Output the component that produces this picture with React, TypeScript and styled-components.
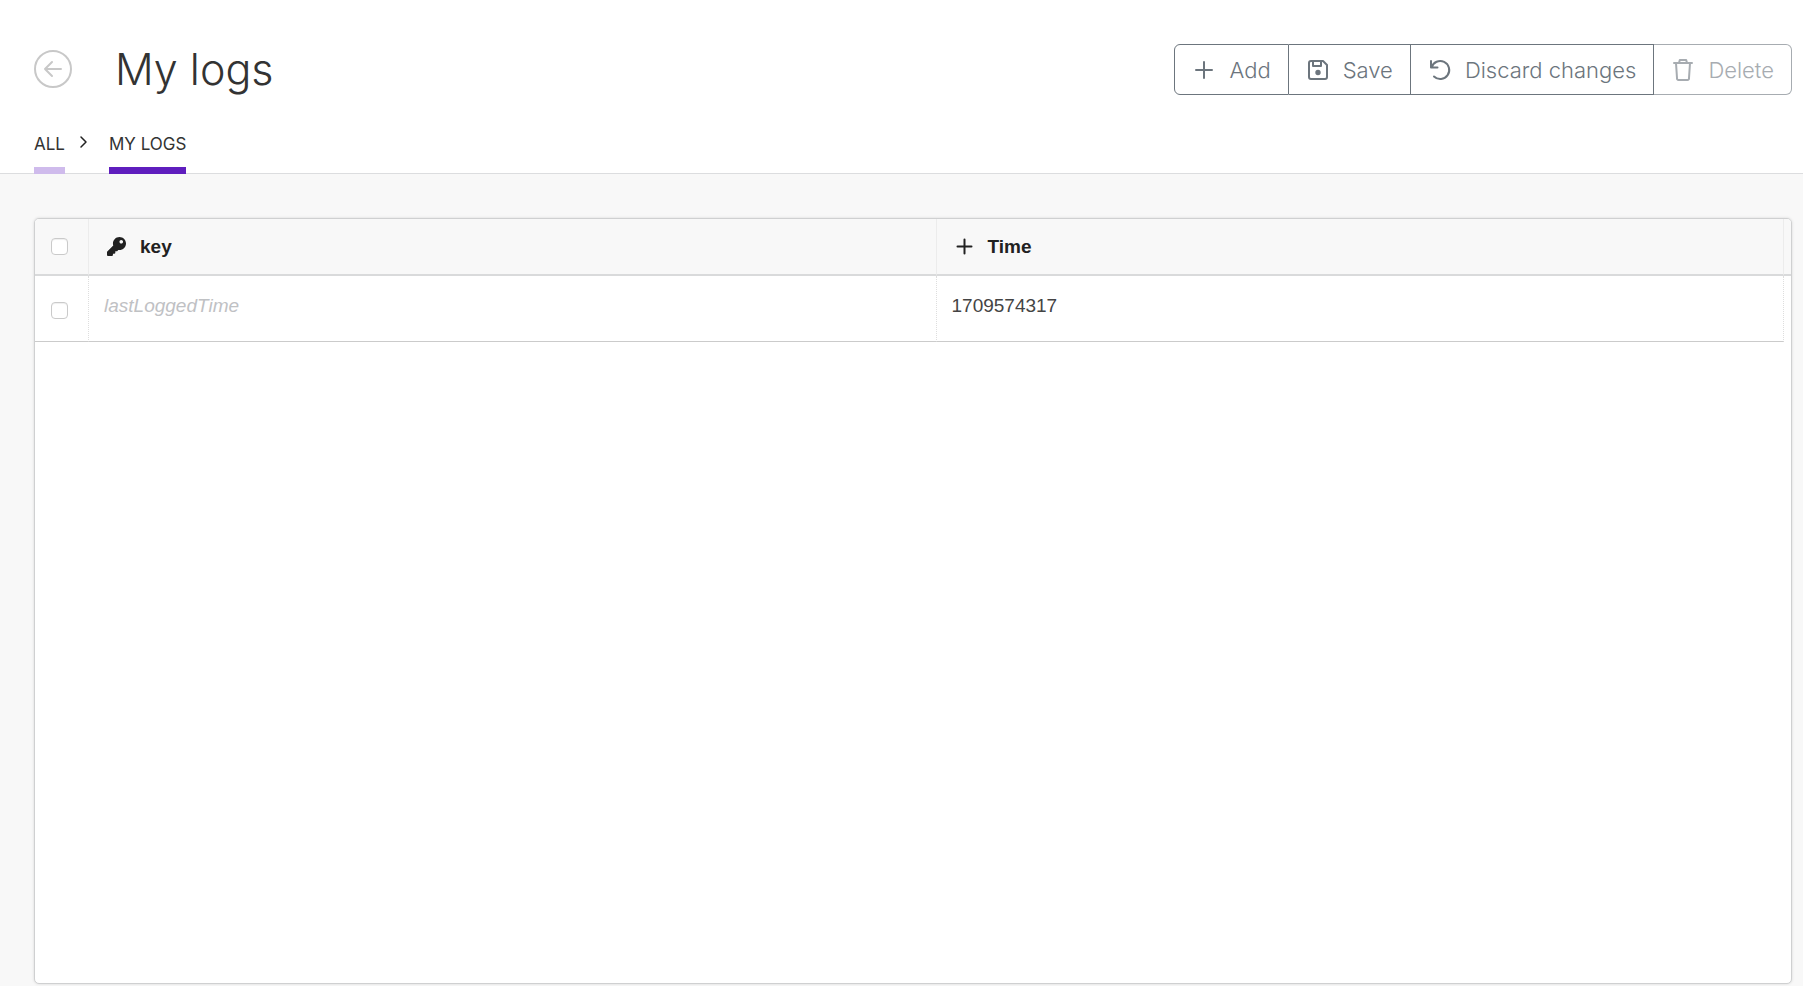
import React from "react";
import styled, { createGlobalStyle } from "styled-components";
import { FaKey } from "react-icons/fa";

const GlobalStyle = createGlobalStyle`
  *, *::before, *::after { box-sizing: border-box; }
  body { margin: 0; background: #fff; font-family: Inter, "Liberation Sans", sans-serif; }
`;

const Page = styled.div`
  display: flex;
  flex-direction: column;
  min-height: 100vh;
  margin-right: 13px;
`;

const Header = styled.header`
  padding: 44px 11px 0 34px;
  border-bottom: 1px solid #dcdddf;
`;

const TitleRow = styled.div`
  display: flex;
  align-items: center;
  height: 51px;
`;

const BackButton = styled.button`
  display: flex;
  padding: 0 0 2px;
  border: 0;
  background: none;
  color: #c8c8c8;
`;

const Title = styled.h1`
  flex: 1;
  margin: 0 0 0 43px;
  padding-bottom: 2px;
  color: #333;
  font-size: 43px;
  font-weight: 300;
  line-height: 50px;
`;

const Toolbar = styled.div`
  display: flex;
  height: 51px;
`;

const ToolButton = styled.button`
  display: flex;
  align-items: center;
  gap: 13px;
  padding: 0 17px;
  border: 1px solid #6c757d;
  border-left-width: 0;
  background: #fff;
  color: #6c757d;
  font-family: inherit;
  font-size: 22px;
  font-weight: 350;
  line-height: 32px;
  white-space: nowrap;

  &:first-child { border-left-width: 1px; border-radius: 6px 0 0 6px; }
  &:last-child { border-radius: 0 6px 6px 0; }
  &:disabled { border-color: #a7acb1; color: #a7acb1; }
`;

const Icon = styled.svg`
  flex: none;
  fill: none;
  stroke: currentColor;
  stroke-width: 2;
  stroke-linecap: round;
  stroke-linejoin: round;
`;

const Breadcrumbs = styled.nav`
  display: flex;
  align-items: flex-start;
  height: 78px;
  padding-top: 35px;
`;

const Crumb = styled.a<{ $active?: boolean }>`
  height: 44px;
  border-bottom: 7px solid ${(p) => (p.$active ? "#5f1ebe" : "#cfbbec")};
  color: #333;
  font-size: 17px;
  font-weight: 400;
  line-height: 28px;
  text-decoration: none;
`;

const CrumbArrow = styled(Icon)`
  margin: 5px 18px 0 12px;
  color: #222;
  stroke-width: 1.5;
`;

const Content = styled.main`
  display: flex;
  flex: 1;
  padding: 44px 11px 2px 34px;
  background: #f8f8f8;
`;

const Panel = styled.section`
  flex: 1;
  overflow: hidden;
  border: 1px solid #cfd0d1;
  border-radius: 5px;
  background: #fff;
  box-shadow: 0 0 3px #0002;
`;

const Table = styled.table`
  width: 100%;
  table-layout: fixed;
  border-collapse: separate;
  border-spacing: 0;
  font-family: "Liberation Sans", Arial, sans-serif;
  font-size: 19px;
  line-height: 22px;
`;

const SelectColumn = styled.col`
  width: 54px;
`;

const GutterColumn = styled.col`
  width: 7px;
`;

const HeadCell = styled.th`
  height: 57px;
  padding: 0 18px;
  border-right: 1px solid #ececec;
  border-bottom: 2px solid #d9dadb;
  background: #f8f8f8;
  color: #212121;
  font-weight: 700;
  text-align: left;

  &:first-child { padding: 0 16px; }
  &:last-child { padding: 0; border-right: 0; }
`;

const HeadLabel = styled.span`
  display: flex;
  align-items: center;
  gap: 14px;
`;

const Cell = styled.td<{ $muted?: boolean }>`
  height: 66px;
  padding: 19px 15px 0;
  border-right: 1px dotted #dedede;
  border-bottom: 1px solid #cbcbcb;
  color: ${(p) => (p.$muted ? "#bfc1c4" : "#444")};
  font-style: ${(p) => (p.$muted ? "italic" : "normal")};
  vertical-align: top;

  &:first-child { padding: 26px 16px 0; }
  &:last-child { padding: 0; border: 0; }
`;

const Checkbox = styled.input.attrs({ type: "checkbox" })`
  display: block;
  width: 17px;
  height: 17px;
  margin: 0;
  appearance: none;
  border: 1px solid #cacaca;
  border-radius: 4px;
  background: #fff;
  box-shadow: inset 0 1px 1px #0001;

  &:checked { background: #5f1ebe; }
`;

export default function App() {
  return (
    <>
      <GlobalStyle />
      <Page>
        <Header>
          <TitleRow>
            <BackButton type="button" aria-label="Back">
              <Icon width="38" height="38" viewBox="0 0 38 38">
                <circle cx="19" cy="19" r="18" />
                <path d="M27 19H11M18 12l-7 7 7 7" />
              </Icon>
            </BackButton>
            <Title>My logs</Title>
            <Toolbar>
              <ToolButton type="button">
                <Icon width="24" height="24" viewBox="0 0 24 24"><path d="M12 4v16M4 12h16" /></Icon>
                Add
              </ToolButton>
              <ToolButton type="button">
                <Icon width="24" height="24" viewBox="0 0 24 24">
                  <path d="M17 3H5a2 2 0 0 0-2 2v14a2 2 0 0 0 2 2h14a2 2 0 0 0 2-2V7zM7 3v5h8V3" />
                  <circle cx="12" cy="14.5" r="1.7" fill="currentColor" />
                </Icon>
                Save
              </ToolButton>
              <ToolButton type="button">
                <Icon width="24" height="24" viewBox="0 0 24 24">
                  <path d="M3 3v6.500h6.500M3.600 9.400A9 9 0 1 1 6 18.500" />
                </Icon>
                Discard changes
              </ToolButton>
              <ToolButton type="button" disabled>
                <Icon width="24" height="24" viewBox="0 0 24 24">
                  <path d="M3 5h18M8 5l.8-3h6.400L16 5M5 5l1 15A1.600 1.600 0 0 0 7.600 22h8.800a1.600 1.600 0 0 0 1.600-2L19 5" />
                </Icon>
                Delete
              </ToolButton>
            </Toolbar>
          </TitleRow>
          <Breadcrumbs aria-label="Breadcrumb">
            <Crumb href="#all">ALL</Crumb>
            <CrumbArrow width="14" height="14" viewBox="0 0 14 14"><path d="M4 2l5 5-5 5" /></CrumbArrow>
            <Crumb href="#my-logs" $active>MY LOGS</Crumb>
          </Breadcrumbs>
        </Header>
        <Content>
          <Panel>
            <Table>
              <colgroup>
                <SelectColumn />
                <col />
                <col />
                <GutterColumn />
              </colgroup>
              <thead>
                <tr>
                  <HeadCell><Checkbox aria-label="Select all rows" /></HeadCell>
                  <HeadCell><HeadLabel><FaKey size={19} />key</HeadLabel></HeadCell>
                  <HeadCell>
                    <HeadLabel>
                      <Icon width="19" height="19" viewBox="0 0 19 19"><path d="M9.500 2.500v14M2.500 9.500h14" /></Icon>
                      Time
                    </HeadLabel>
                  </HeadCell>
                  <HeadCell aria-hidden="true" />
                </tr>
              </thead>
              <tbody>
                <tr>
                  <Cell><Checkbox aria-label="Select lastLoggedTime" /></Cell>
                  <Cell $muted>lastLoggedTime</Cell>
                  <Cell>1709574317</Cell>
                  <Cell aria-hidden="true" />
                </tr>
              </tbody>
            </Table>
          </Panel>
        </Content>
      </Page>
    </>
  );
}
